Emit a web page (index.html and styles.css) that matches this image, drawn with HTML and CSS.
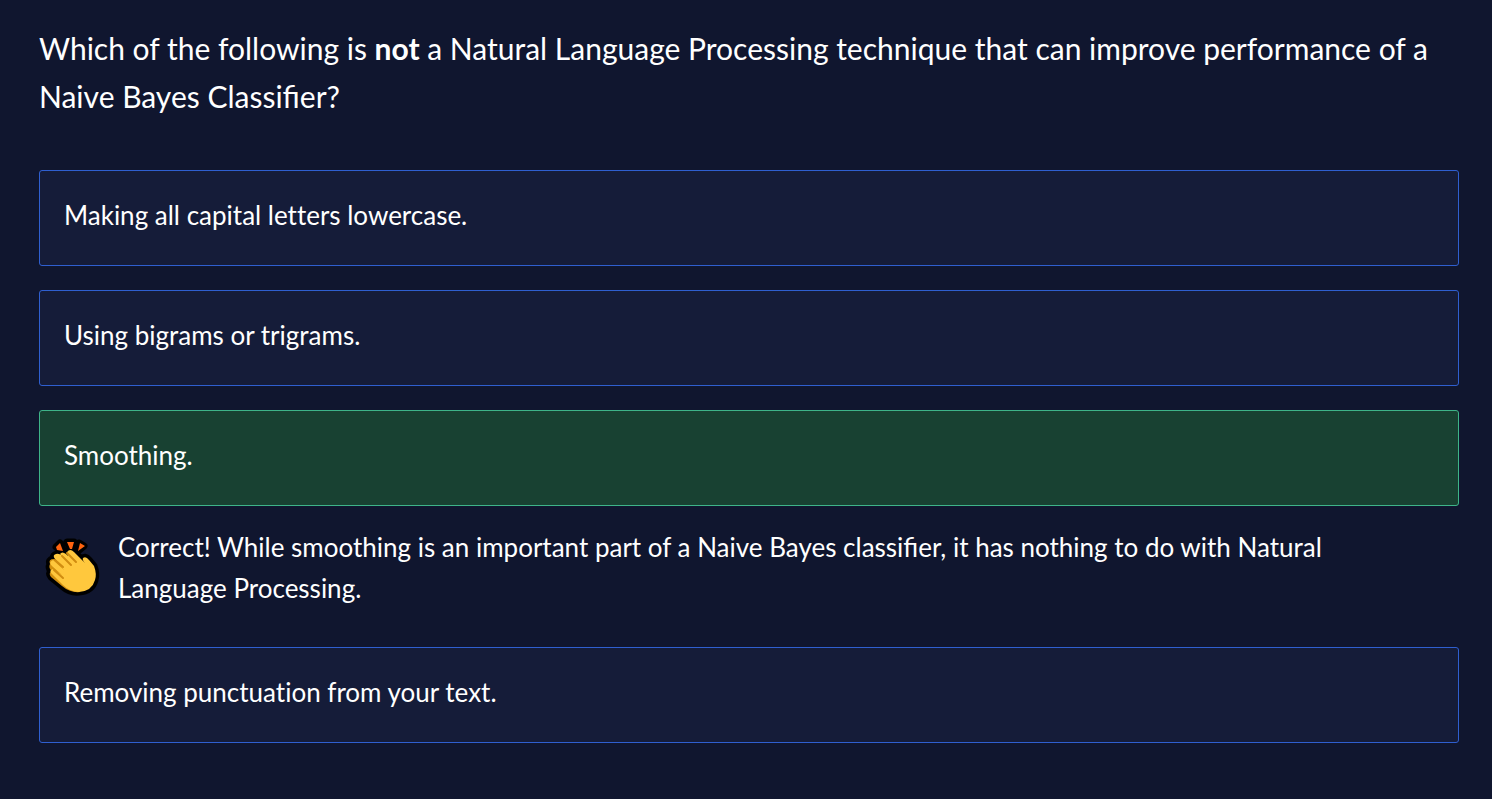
FILE: index.html
```html
<!DOCTYPE html>
<html lang="en">
<head>
<meta charset="utf-8">
<meta name="viewport" content="width=device-width, initial-scale=1">
<title>Naive Bayes Quiz</title>
<link rel="stylesheet" href="styles.css">
</head>
<body>
<main class="quiz">
  <h1 class="question">Which of the following is <strong>not</strong> a Natural Language Processing technique that can improve performance of a Naive Bayes Classifier?</h1>
  <div class="answers">
    <button class="answer" type="button">Making all capital letters lowercase.</button>
    <button class="answer" type="button">Using bigrams or trigrams.</button>
    <button class="answer answer-correct" type="button">Smoothing.</button>
    <div class="feedback" role="status">
      <svg class="clap" viewBox="0 0 76 76" aria-hidden="true">
        <path class="outline" d="M20 17L24 13L27 20ZM31 12H38L35 19ZM43 13L48 16L42 21ZM14 34Q12 30 17 29Q17 25 21 24Q25 21 29 23Q33 18 37 22L46 29Q49 25 53 30L58 36Q61 44 59 50Q56 61 43 62Q34 63 26 56L15 47Q12 43 15 41Q12 38 14 34Z"/>
        <path class="spark" d="M20 17L24 13L27 21L21 20ZM31 12H38L36 19H34ZM44 13L49 16L42 21Z"/>
        <path class="hand-back" d="M14 34Q12 29 18 29L29 39L44 62Q34 63 26 56L15 47Q12 43 16 41Q12 38 14 34Z"/>
        <path class="hand" d="M19 29Q16 25 20 24Q23 23 26 26L24 24Q26 21 30 24L32 26L31 22Q34 18 38 22L49 33Q46 30 47 28Q50 26 53 30L58 36Q61 44 59 50Q56 61 43 62Q34 62 27 55L15 43Q13 40 17 39L26 45L16 36Q12 32 17 30L28 40Z"/>
        <path class="crease" d="M19 30L27 37M18 40L27 48M26 26L35 35M31 23L40 32"/>
      </svg>
      <p class="feedback-text">Correct! While smoothing is an important part of a Naive Bayes classifier, it has nothing to do with Natural Language Processing.</p>
    </div>
    <button class="answer" type="button">Removing punctuation from your text.</button>
  </div>
</main>
</body>
</html>
```
FILE: styles.css
```css
* { box-sizing: border-box; }
body {
  margin: 0;
  background: #10162f;
  color: #fff;
  font-family: Lato, "Open Sans", sans-serif;
}
.quiz { padding: 24px 33px 56px 39px; }
.question {
  margin: 0 0 50px;
  font-size: 30px;
  font-weight: 400;
  line-height: 48px;
}
.question strong { font-weight: 700; }
.answers {
  display: flex;
  flex-direction: column;
  gap: 24px;
}
.answer {
  width: 100%;
  padding: 24px 24px 29px;
  border: 1px solid #2f5fd0;
  border-radius: 3px;
  background: #151c39;
  color: #fff;
  font: inherit;
  font-size: 26px;
  line-height: 41px;
  font-variant-ligatures: none;
  text-align: left;
  cursor: pointer;
}
.answer-correct {
  border-color: #3eb489;
  background: #184132;
}
.feedback {
  display: flex;
  align-items: center;
  gap: 6px;
  padding-right: 97px;
  margin: -3px 0 14px -3px;
}
.clap {
  flex: none;
  width: 76px;
  height: 76px;
}
.feedback-text {
  margin: 0;
  font-size: 26px;
  line-height: 41px;
}
.outline {
  fill: #000;
  stroke: #000;
  stroke-width: 7;
  stroke-linejoin: round;
}
.spark { fill: #ff6410; }
.hand { fill: #ffc83d; }
.hand-back { fill: #d29010; }
.crease {
  fill: none;
  stroke: #d08c10;
  stroke-width: 2;
  stroke-linecap: round;
}
```
